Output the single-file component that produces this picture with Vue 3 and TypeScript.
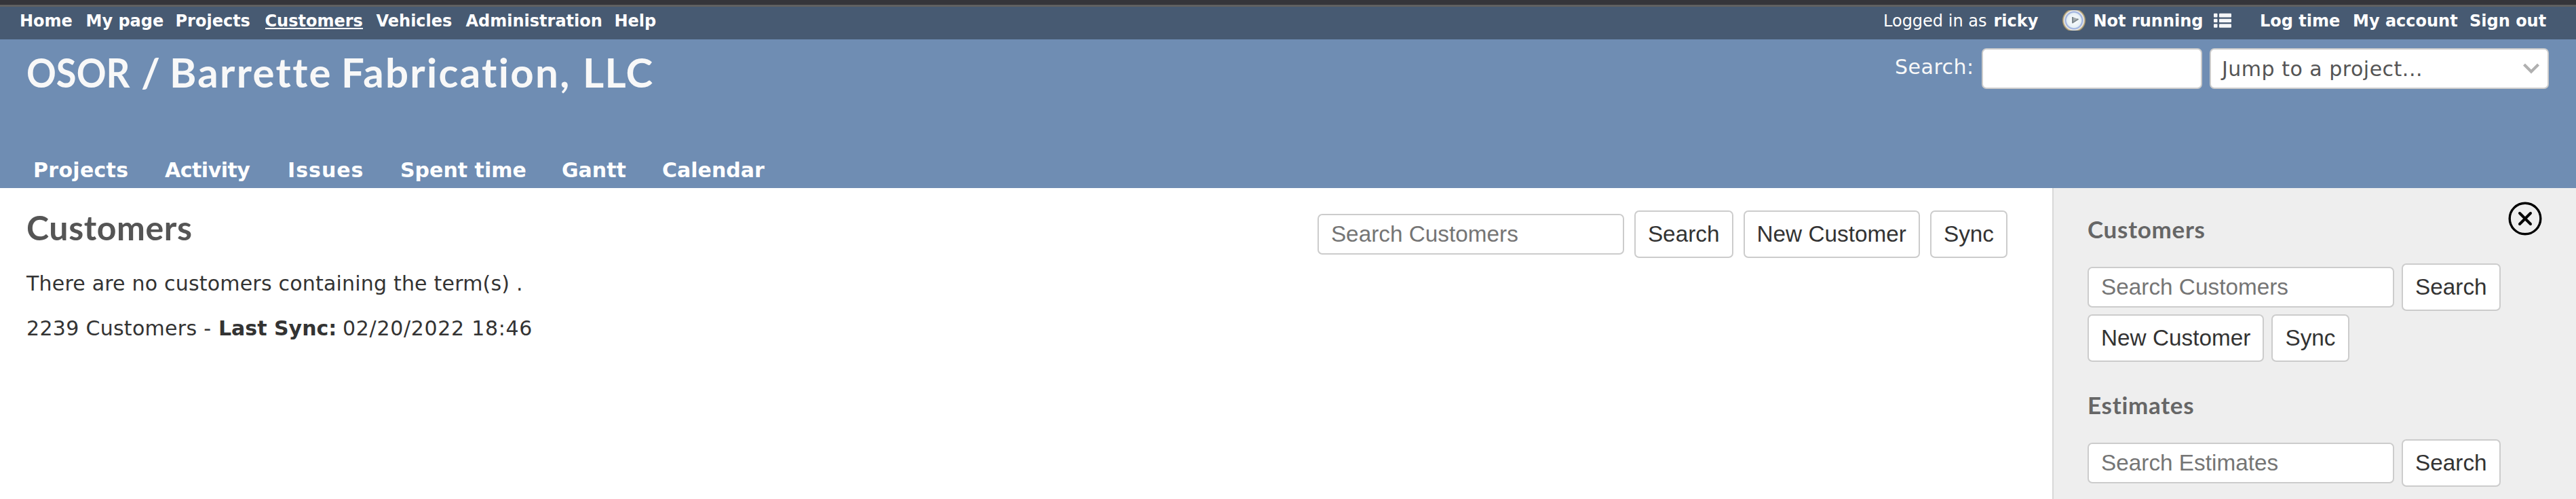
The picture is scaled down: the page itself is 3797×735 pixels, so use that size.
<script setup lang="ts">
interface Tab {
  label: string
  cls: string
}

const menu: string[] = ['Home', 'My page', 'Projects', 'Customers', 'Vehicles', 'Administration', 'Help']
const active = 'Customers'

const tabs: Tab[] = [
  { label: 'Projects', cls: 'wide-s' },
  { label: 'Activity', cls: 'tight' },
  { label: 'Issues', cls: 'wide-l' },
  { label: 'Spent time', cls: '' },
  { label: 'Gantt', cls: '' },
  { label: 'Calendar', cls: '' },
]
</script>

<template>
  <div class="page">
    <div class="chrome"></div>

    <nav class="top-menu">
      <div class="menu-left">
        <span v-for="item in menu" :key="item">
          <a :class="{ active: item === active }">{{ item }}</a>
        </span>
      </div>
      <div class="menu-right">
        <span class="logged">Logged in as</span>
        <a>ricky</a>
        <svg class="clock" width="36" height="30" viewBox="0 0 36 30">
          <defs>
            <radialGradient id="face" cx=".5" cy=".5" r=".5">
              <stop offset="0" stop-color="#ffffff" />
              <stop offset=".6" stop-color="#e6f0f5" />
              <stop offset=".71" stop-color="#93a9dc" />
              <stop offset=".82" stop-color="#ececea" />
              <stop offset=".92" stop-color="#b8a578" />
              <stop offset="1" stop-color="#6f6f68" />
            </radialGradient>
          </defs>
          <circle cx="18" cy="15" r="17.4" fill="url(#face)" />
          <path d="M16 10v8.5l8.5-5.500" fill="#a3abae" stroke="#7d888d" stroke-width="2" stroke-linejoin="round" />
        </svg>
        <a>Not running</a>
        <svg class="list" width="26" height="30" viewBox="0 0 26 30" fill="#f5f6f8">
          <rect x="0" y="3.7" width="5.5" height="5.8" rx="1" />
          <rect x="8" y="3.7" width="18" height="5.8" rx="1" />
          <rect x="0" y="11.7" width="5.5" height="5.2" rx="1" />
          <rect x="8" y="11.7" width="18" height="5.2" rx="1" />
          <rect x="0" y="19.2" width="5.5" height="5.6" rx="1" />
          <rect x="8" y="19.2" width="18" height="5.6" rx="1" />
        </svg>
        <a>Log time</a>
        <a>My account</a>
        <a>Sign out</a>
      </div>
    </nav>

    <header class="header">
      <div class="header-row">
        <h1>
          <span class="acronym">OSOR</span>
          <span>/</span>
          <span class="loose">Barrette</span>
          <span class="loose">Fabrication,</span>
          <span class="llc">LLC</span>
        </h1>
        <div class="quick-search">
          <label>Search:</label>
          <input class="box quick-input" type="text" />
          <div class="box jump">
            <span>Jump to a project...</span>
            <svg width="24" height="16" viewBox="0 0 24 16" fill="none" stroke="#b0b0b0" stroke-width="4.2">
              <path d="M1.5 2L12 12.5L22.5 2" />
            </svg>
          </div>
        </div>
      </div>
      <div class="tabs">
        <span v-for="t in tabs" :key="t.label"><a :class="t.cls">{{ t.label }}</a></span>
      </div>
    </header>

    <div class="body">
      <main class="content">
        <div class="content-head">
          <h2>Customers</h2>
          <div class="controls">
            <input class="box field" type="text" placeholder="Search Customers" />
            <button class="box">Search</button>
            <button class="box">New Customer</button>
            <button class="box">Sync</button>
          </div>
        </div>
        <p class="empty">There are no customers containing the term(s) .</p>
        <p class="sync">
          <span class="count">2239 Customers -</span>
          <b>Last Sync:</b>
          <span class="date">02/20/2022 18:46</span>
        </p>
      </main>

      <aside class="sidebar">
        <svg class="close" width="50" height="50" viewBox="0 0 50 50" fill="none" stroke="#000">
          <circle cx="25" cy="25" r="22.8" stroke-width="3.4" />
          <path d="M17 17L33 33M33 17L17 33" stroke-width="4" stroke-linecap="round" />
        </svg>
        <h3>Customers</h3>
        <div class="row">
          <input class="box field" type="text" placeholder="Search Customers" />
          <button class="box">Search</button>
        </div>
        <div class="row second">
          <button class="box">New Customer</button>
          <button class="box">Sync</button>
        </div>
        <h3 class="next">Estimates</h3>
        <div class="row">
          <input class="box field" type="text" placeholder="Search Estimates" />
          <button class="box">Search</button>
        </div>
      </aside>
    </div>
  </div>
</template>

<style>
body {
  margin: 0;
  background: #fff;
}
</style>

<style scoped>
.page {
  width: 3797px;
  height: 735px;
  overflow: hidden;
  display: flex;
  flex-direction: column;
  font-family: "DejaVu Sans", Verdana, sans-serif;
  font-size: 30px;
  color: #333;
  background: #fff;
}
* {
  box-sizing: border-box;
}
h1,
h2,
h3,
p {
  margin: 0;
}
.chrome {
  height: 10px;
  flex: none;
  background: #35353a;
  border-bottom: 3px solid #606060;
}
.top-menu {
  height: 48px;
  flex: none;
  background: #475a72;
  color: #fff;
  font-size: 24px;
  font-weight: bold;
  line-height: 30px;
  padding: 6px 44px 0 29px;
  display: flex;
  justify-content: space-between;
  white-space: nowrap;
}
.menu-left {
  display: grid;
  grid-template-columns: 97.5px 132px 132px 164px 132px 219px 70px;
}
.menu-left .active {
  display: inline-block;
  height: 27px;
  border-bottom: 2px solid #fff;
}
.menu-right {
  display: grid;
  grid-template-columns: 162.5px 100.5px 46.5px 177.5px 68px 137px 172px 113px;
}
.logged {
  font-weight: normal;
}
.clock {
  margin-top: -1px;
}
.header {
  height: 219px;
  flex: none;
  background: #6f8db3;
  color: #f8f8f8;
  display: flex;
  flex-direction: column;
  justify-content: space-between;
  padding-bottom: 6px;
}
.header-row {
  display: flex;
  justify-content: space-between;
  padding: 8px 40px 0 39px;
}
h1 {
  font: bold 60px/80px Lato, "Trebuchet MS", sans-serif;
  display: grid;
  grid-template-columns: 169px 42px 253px 356px 105px;
  white-space: nowrap;
}
.acronym {
  transform: scaleX(0.905);
  transform-origin: left;
}
.loose {
  letter-spacing: 2.3px;
}
.llc {
  letter-spacing: 1.3px;
}
.quick-search {
  display: flex;
  padding-top: 5px;
}
.quick-search label {
  line-height: 55px;
  letter-spacing: 0.5px;
  width: 128px;
}
.box {
  background: #fff;
  border: 2px solid #ccc;
  border-radius: 7px;
  color: #333;
  margin: 0;
}
.quick-input {
  width: 325px;
  height: 60px;
  margin-right: 11px;
}
.jump {
  width: 500px;
  height: 60px;
  display: flex;
  align-items: center;
  justify-content: space-between;
  color: #555;
  letter-spacing: 0.5px;
  padding: 0 12px 0 16px;
}
.tabs {
  display: grid;
  grid-template-columns: 194px 181px 166px 238px 148px 160px;
  padding-left: 49px;
  color: #fff;
  font-weight: bold;
  line-height: 40px;
  white-space: nowrap;
}
.wide-s {
  letter-spacing: 0.3px;
}
.wide-l {
  letter-spacing: 1px;
}
.tight {
  letter-spacing: -0.5px;
}
.body {
  flex: 1;
  display: flex;
}
.content {
  flex: 1;
  padding: 28px 66px 0 39px;
}
.content-head {
  display: flex;
  justify-content: space-between;
  height: 93px;
}
h2 {
  font: bold 50px/60px Lato, "Trebuchet MS", sans-serif;
  letter-spacing: 0.6px;
  color: #555;
}
.controls {
  display: flex;
  align-items: center;
  gap: 15px;
  height: 70px;
  margin-top: 5px;
}
.field,
button {
  font: 33.33px "Liberation Sans", Arial, sans-serif;
  white-space: nowrap;
}
.field {
  width: 452px;
  height: 60px;
  padding: 0 18px;
}
.field::placeholder {
  color: #757575;
  opacity: 1;
}
button {
  height: 70px;
  padding: 0 18px;
}
.empty {
  line-height: 40px;
  letter-spacing: 0.2px;
}
.sync {
  margin-top: 26px;
  line-height: 40px;
  display: grid;
  grid-template-columns: 283px 183px 300px;
  white-space: nowrap;
}
.count {
  letter-spacing: 0.3px;
}
.date {
  letter-spacing: 0.7px;
}
.sidebar {
  position: relative;
  width: 772px;
  background: #eee;
  border-left: 2px solid #d8d8d8;
  padding: 40px 0 0 50px;
}
.close {
  position: absolute;
  top: 20px;
  right: 50px;
}
h3 {
  font: bold 35px/40px Lato, "Trebuchet MS", sans-serif;
  letter-spacing: 0.7px;
  color: #666;
  margin-bottom: 31px;
}
h3.next {
  margin-top: 43px;
}
.row {
  display: flex;
  align-items: center;
  gap: 11px;
}
.second {
  margin-top: 5px;
}
</style>
